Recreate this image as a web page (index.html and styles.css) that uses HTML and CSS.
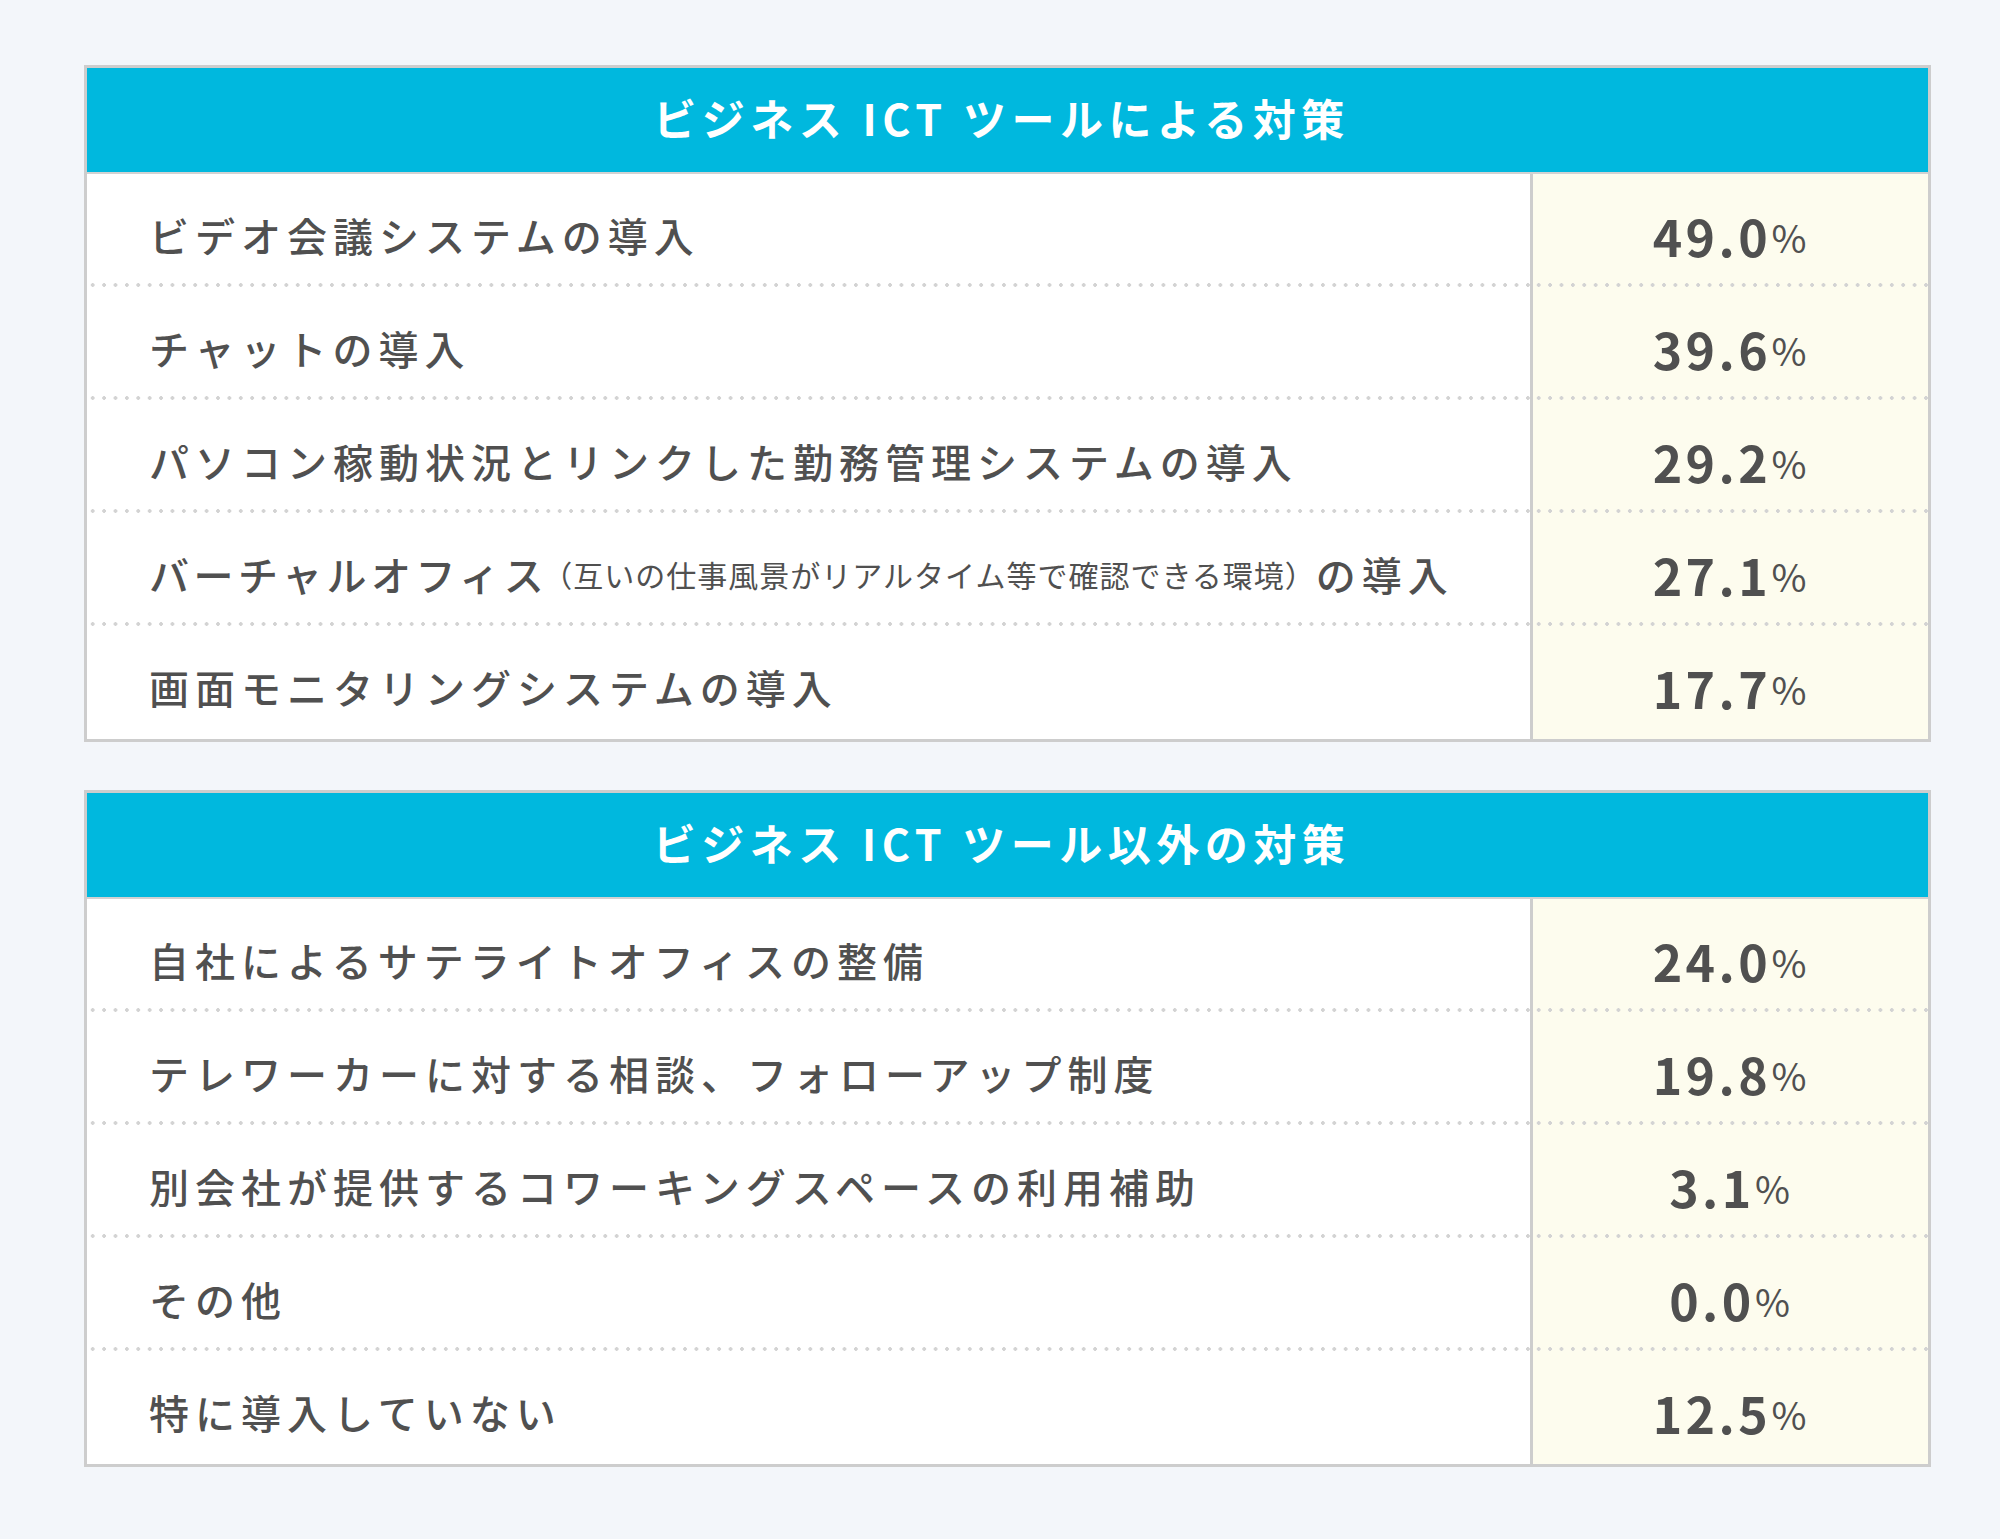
FILE: index.html
```html
<!DOCTYPE html>
<html lang="ja">
<head>
<meta charset="utf-8">
<title>ICTツール対策</title>
<link rel="stylesheet" href="styles.css">
</head>
<body>
<main class="page">
  <section class="tbl">
    <h2 class="tbl-head">ビジネス ICT ツールによる対策</h2>
    <div class="row"><div class="label">ビデオ会議システムの導入</div><div class="value"><span class="num">49.0</span><span class="pct">%</span></div></div>
    <div class="row"><div class="label">チャットの導入</div><div class="value"><span class="num">39.6</span><span class="pct">%</span></div></div>
    <div class="row"><div class="label">パソコン稼動状況とリンクした勤務管理システムの導入</div><div class="value"><span class="num">29.2</span><span class="pct">%</span></div></div>
    <div class="row"><div class="label"><span class="tight">バーチャルオフィス</span><span class="note">（互いの仕事風景がリアルタイム等で確認できる環境）</span>の導入</div><div class="value"><span class="num">27.1</span><span class="pct">%</span></div></div>
    <div class="row last"><div class="label">画面モニタリングシステムの導入</div><div class="value"><span class="num">17.7</span><span class="pct">%</span></div></div>
  </section>
  <section class="tbl">
    <h2 class="tbl-head">ビジネス ICT ツール以外の対策</h2>
    <div class="row"><div class="label">自社によるサテライトオフィスの整備</div><div class="value"><span class="num">24.0</span><span class="pct">%</span></div></div>
    <div class="row"><div class="label">テレワーカーに対する相談、フォローアップ制度</div><div class="value"><span class="num">19.8</span><span class="pct">%</span></div></div>
    <div class="row"><div class="label">別会社が提供するコワーキングスペースの利用補助</div><div class="value"><span class="num">3.1</span><span class="pct">%</span></div></div>
    <div class="row"><div class="label">その他</div><div class="value"><span class="num">0.0</span><span class="pct">%</span></div></div>
    <div class="row last"><div class="label">特に導入していない</div><div class="value"><span class="num">12.5</span><span class="pct">%</span></div></div>
  </section>
</main>
</body>
</html>
```
FILE: styles.css
```css
html, body {
  margin: 0;
  padding: 0;
}
body {
  background: #f3f6fa;
  font-family: "Noto Sans CJK JP", "Noto Sans", sans-serif;
  color: #505050;
}
.page {
  width: 2000px;
  height: 1539px;
  box-sizing: border-box;
  padding: 65px 0 0 84px;
  display: flex;
  flex-direction: column;
  gap: 48px;
}
.tbl {
  width: 1847px;
  box-sizing: border-box;
  border: 3px solid #cdcdcd;
  background: #fff;
}
.tbl-head {
  margin: 0;
  height: 106px;
  box-sizing: border-box;
  border-bottom: 2px solid #d2d2d2;
  background: #00b8de;
  color: #fff;
  font-size: 43px;
  font-weight: 700;
  letter-spacing: 5.5px;
  display: flex;
  align-items: center;
  justify-content: center;
  padding-bottom: 7px;
  padding-right: 12px;
}
.row {
  display: grid;
  grid-template-columns: 1fr 398px;
  height: 113px;
}
.label, .value {
  display: flex;
  align-items: center;
  padding-top: 8px;
  box-sizing: border-box;
  background-image: radial-gradient(circle, #d3d3d3 1.7px, rgba(211,211,211,0) 2.1px);
  background-size: 11.4px 4px;
  background-repeat: repeat-x;
  background-position: 0 100%;
}
.label {
  padding-left: 62px;
  font-size: 40px;
  font-weight: 500;
  letter-spacing: 6px;
  white-space: nowrap;
}
.tight {
  letter-spacing: 4.5px;
}
.note {
  font-size: 30px;
  letter-spacing: 1px;
  font-weight: 400;
  margin-left: -6px;
}
.value {
  justify-content: center;
  border-left: 3px solid #cdcdcd;
  background-color: #fdfcee;
  padding-right: 2px;
}
.num {
  font-size: 50px;
  font-weight: 700;
  letter-spacing: 3.5px;
}
.pct {
  font-size: 38px;
  font-weight: 400;
  padding-top: 4px;
}
.row.last .label, .row.last .value {
  background-image: none;
}
```
